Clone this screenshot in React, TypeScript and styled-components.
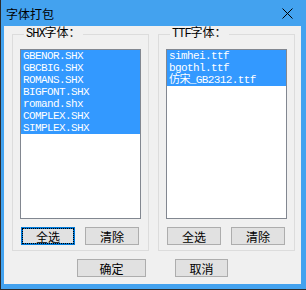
import React from 'react';
import styled, { createGlobalStyle, css } from 'styled-components';

const GlobalStyle = createGlobalStyle`
  html, body {
    margin: 0;
    padding: 0;
    background: #ffffff;
  }
`;

const Window = styled.div`
  width: 306px;
  height: 290px;
  box-sizing: border-box;
  display: flex;
  flex-direction: column;

  background: #43a2ef;
  border-left: 1px solid #2b2b2b;
  border-bottom: 1px solid #2b2b2b;
  padding: 0 5px 5px 3px;
`;

const TitleBar = styled.div`
  height: 26px;
  flex: none;
  display: flex;
  align-items: center;
  justify-content: space-between;
  padding: 0 8px 0 2px;

  font-family: 'Noto Sans CJK SC', sans-serif;
  font-size: 12px;
  color: #000;
`;

const CloseIcon = styled.svg`
  width: 11px;
  height: 11px;
`;

const Client = styled.div`
  flex: 1;
  display: flex;
  flex-direction: column;
  background: #f0f0f0;
  padding: 1px 0 0 8px;
`;

const GroupRow = styled.div`
  display: flex;
  gap: 9px;
`;

const Group = styled.fieldset`
  width: 137px;
  height: 224px;
  box-sizing: border-box;
  margin: 0;
  padding: 0 7px;
  border: 1px solid #dcdcdc;
  display: flex;
  flex-direction: column;
`;

const Legend = styled.legend`
  padding: 0 2px;
  margin-left: 4px;
  height: 14px;
  line-height: 14px;
  font-family: 'Liberation Mono', 'Noto Sans CJK SC', monospace;
  font-size: 12px;
  color: #000;
`;

const Latin = styled.span`
  letter-spacing: -1px;
`;

const List = styled.div`
  margin-top: 8px;
  height: 170px;
  box-sizing: border-box;
  border: 1px solid #828790;
  background: #fff;
  overflow: hidden;
`;

const Item = styled.div<{ selected?: boolean }>`
  height: 12px;
  line-height: 12px;
  padding-left: 2px;
  white-space: nowrap;

  font-family: 'Liberation Mono', 'Noto Sans CJK SC', monospace;
  font-size: 11px;
  letter-spacing: -0.6px;
  color: #000;

  ${({ selected }) =>
    selected &&
    css`
      background: #3399ff;
      color: #fff;
    `}
`;

const ButtonRow = styled.div`
  display: flex;
  gap: 10px;
  margin-top: 8px;
  padding-left: 1px;
`;

const Button = styled.div<{ focused?: boolean; wide?: boolean }>`
  width: ${({ wide }) => (wide ? 69 : 54)}px;
  height: 18px;
  box-sizing: border-box;
  display: flex;
  align-items: center;
  justify-content: center;

  background: #e1e1e1;
  border: 1px solid #adadad;

  font-family: 'Noto Sans CJK SC', sans-serif;
  font-size: 12px;
  color: #000;

  ${({ focused }) =>
    focused &&
    css`
      border: 2px solid #0078d7;
    `}
`;

const FocusRing = styled.span`
  flex: 1;
  align-self: stretch;
  display: flex;
  align-items: center;
  justify-content: center;
  outline: 1px dotted #000;
`;

const Footer = styled.div`
  display: flex;
  justify-content: center;
  gap: 29px;
  margin-top: 8px;
  padding-right: 8px;
`;

const SmallButton = styled(Button)`
  width: 53px;
`;

const shxFonts = [
  'GBENOR.SHX',
  'GBCBIG.SHX',
  'ROMANS.SHX',
  'BIGFONT.SHX',
  'romand.shx',
  'COMPLEX.SHX',
  'SIMPLEX.SHX',
];

const ttfFonts = ['simhei.ttf', 'bgothl.ttf', '仿宋_GB2312.ttf'];

interface FontGroupProps {
  prefix: string;
  items: string[];
  focusAll?: boolean;
}

const FontGroup: React.FC<FontGroupProps> = ({ prefix, items, focusAll }) => (
  <Group>
    <Legend>
      <Latin>{prefix}</Latin>字体：
    </Legend>
    <List>
      {items.map((name) => (
        <Item key={name} selected>
          {name}
        </Item>
      ))}
    </List>
    <ButtonRow>
      <Button focused={focusAll}>
        {focusAll ? <FocusRing>全选</FocusRing> : '全选'}
      </Button>
      <Button>清除</Button>
    </ButtonRow>
  </Group>
);

const App: React.FC = () => {
  return (
    <>
      <GlobalStyle />
      <Window>
        <TitleBar>
          <span>字体打包</span>
          <CloseIcon viewBox="0 0 11 11">
            <path d="M0.5 0.5 L10.5 10.5 M10.5 0.5 L0.5 10.5" stroke="#000" strokeWidth="1" />
          </CloseIcon>
        </TitleBar>
        <Client>
          <GroupRow>
            <FontGroup prefix="SHX" items={shxFonts} focusAll />
            <FontGroup prefix="TTF" items={ttfFonts} />
          </GroupRow>
          <Footer>
            <Button wide>确定</Button>
            <SmallButton>取消</SmallButton>
          </Footer>
        </Client>
      </Window>
    </>
  );
};

export default App;
